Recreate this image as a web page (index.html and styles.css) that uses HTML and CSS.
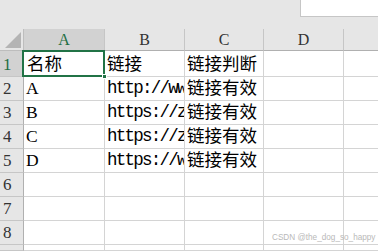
FILE: index.html
```html
<!DOCTYPE html>
<html lang="zh-CN">
<head>
    <meta charset="UTF-8">
    <title>链接判断</title>
    <link rel="stylesheet" href="styles.css">
</head>
<body>
    <div class="topbar">
        <div class="spacer"></div>
        <div class="namebox"></div>
    </div>
    <div class="sheet">
        <div class="corner"><span class="tri"></span></div>
        <div class="col-head active">A</div>
        <div class="col-head">B</div>
        <div class="col-head">C</div>
        <div class="col-head">D</div>
        <div class="col-head last"></div>

        <div class="row-head active first">1</div>
        <div class="cell first selected">名称</div>
        <div class="cell first">链接</div>
        <div class="cell first">链接判断</div>
        <div class="cell first"></div>
        <div class="cell first last"></div>

        <div class="row-head">2</div>
        <div class="cell">A</div>
        <div class="cell url">http://ww</div>
        <div class="cell">链接有效</div>
        <div class="cell"></div>
        <div class="cell last"></div>

        <div class="row-head">3</div>
        <div class="cell">B</div>
        <div class="cell url">https://z</div>
        <div class="cell">链接有效</div>
        <div class="cell"></div>
        <div class="cell last"></div>

        <div class="row-head">4</div>
        <div class="cell">C</div>
        <div class="cell url">https://z</div>
        <div class="cell">链接有效</div>
        <div class="cell"></div>
        <div class="cell last"></div>

        <div class="row-head">5</div>
        <div class="cell">D</div>
        <div class="cell url">https://w</div>
        <div class="cell">链接有效</div>
        <div class="cell"></div>
        <div class="cell last"></div>

        <div class="row-head">6</div>
        <div class="cell"></div><div class="cell"></div><div class="cell"></div><div class="cell"></div><div class="cell last"></div>

        <div class="row-head">7</div>
        <div class="cell"></div><div class="cell"></div><div class="cell"></div><div class="cell"></div><div class="cell last"></div>

        <div class="row-head">8</div>
        <div class="cell"></div><div class="cell"></div><div class="cell"></div><div class="cell"></div><div class="cell last"></div>

        <div class="row-head"></div>
        <div class="cell"></div><div class="cell"></div><div class="cell"></div><div class="cell"></div><div class="cell last"></div>
    </div>
    <div class="watermark">CSDN @the_dog_so_happy</div>
</body>
</html>
```

FILE: styles.css
```css
body {
    margin: 0;
    width: 378px;
    height: 251px;
    overflow: hidden;
    background: #ffffff;
    position: relative;
    font-family: "Liberation Serif", "Noto Sans CJK SC", serif;
}

.topbar {
    display: flex;
    height: 29px;
    background: #e6e6e6;
}

.spacer {
    flex: 1;
}

.namebox {
    width: 77px;
    height: 16px;
    background: #ffffff;
    border-left: 1px solid #c6c6c6;
    border-bottom: 1px solid #c6c6c6;
}

.sheet {
    display: grid;
    grid-template-columns: 24px 81px 80px 79px 80px 1fr;
    grid-template-rows: 22px 26px repeat(7, 24px) 6px;
}

.corner {
    background: #e6e6e6;
    border-right: 1px solid #bdbdbd;
    border-bottom: 1px solid #bdbdbd;
    position: relative;
}

.tri {
    position: absolute;
    right: 2px;
    bottom: 2px;
    width: 0;
    height: 0;
    border-left: 16px solid transparent;
    border-bottom: 16px solid #b4b4b4;
}

.col-head {
    background: #e6e6e6;
    border-right: 1px solid #c6c6c6;
    border-bottom: 1px solid #b0b0b0;
    color: #333333;
    font-size: 16px;
    display: flex;
    align-items: flex-end;
    justify-content: center;
    padding-bottom: 1px;
}

.col-head.active {
    background: #d2d2d2;
    color: #1f6e43;
}

.col-head.last,
.cell.last {
    border-right: 0;
}

.row-head {
    background: #e6e6e6;
    border-right: 1px solid #b0b0b0;
    border-bottom: 1px solid #c6c6c6;
    color: #333333;
    font-size: 17px;
    display: flex;
    align-items: flex-end;
    padding-left: 3px;
    padding-bottom: 1px;
}

.row-head.active {
    background: #d2d2d2;
    color: #1f6e43;
}

.cell {
    border-right: 1px solid #d4d4d4;
    border-bottom: 1px solid #d4d4d4;
    font-size: 17.5px;
    line-height: 20px;
    color: #000000;
    white-space: nowrap;
    overflow: hidden;
    display: flex;
    align-items: flex-end;
    padding-left: 2px;
    padding-bottom: 2px;
}

.cell.url {
    font-family: "Liberation Mono", "Noto Sans CJK SC", monospace;
    letter-spacing: -1.75px;
}

.cell.selected {
    position: relative;
    overflow: visible;
    padding-left: 3px;
}

.cell.selected::before {
    content: "";
    position: absolute;
    left: -2px;
    top: -1px;
    right: -1px;
    bottom: -1px;
    border: 2px solid #217346;
}

.cell.selected::after {
    content: "";
    position: absolute;
    right: -3px;
    bottom: -3px;
    width: 5px;
    height: 5px;
    background: #217346;
    border: 1px solid #ffffff;
    box-sizing: border-box;
}

.watermark {
    position: absolute;
    left: 272px;
    top: 233px;
    font-family: "Liberation Sans", sans-serif;
    font-size: 8.2px;
    color: #b9b9b9;
}
```
